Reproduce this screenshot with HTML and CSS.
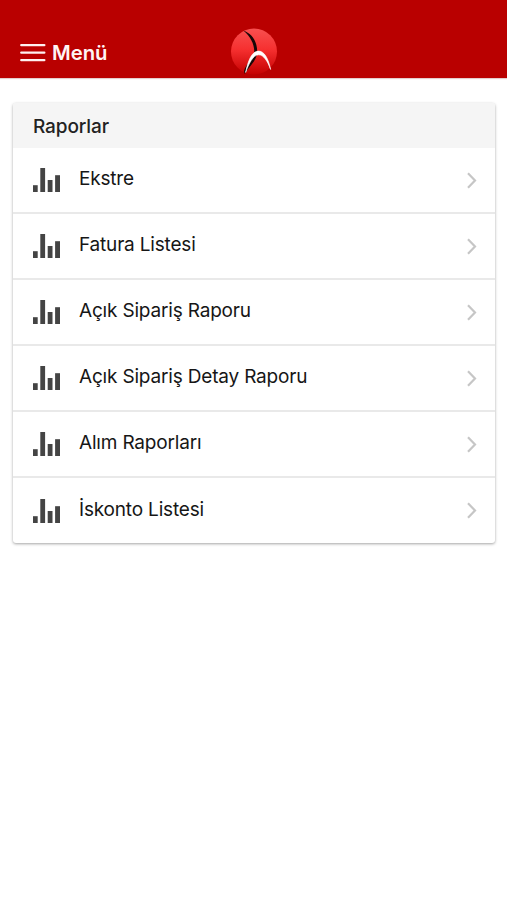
FILE: index.html
```html
<!DOCTYPE html>
<html lang="tr">
<head>
<meta charset="utf-8">
<meta name="viewport" content="width=device-width, initial-scale=1">
<title>Raporlar</title>
<link rel="stylesheet" href="styles.css">
</head>
<body>
<svg class="defs" width="0" height="0" aria-hidden="true">
  <symbol id="bars" viewBox="0 0 28 24">
    <rect x="0" y="17.2" width="4.7" height="6.8"/>
    <rect x="7.3" y="0" width="4.8" height="24"/>
    <rect x="14.7" y="12" width="4.8" height="12"/>
    <rect x="22.1" y="7.2" width="4.9" height="16.8"/>
  </symbol>
  <symbol id="chevron" viewBox="0 0 10 17">
    <path d="M1 1.2 8 8.5 1 15.8"/>
  </symbol>
</svg>
<header class="navbar">
  <button class="menu" type="button">
    <svg class="menu-icon" viewBox="0 0 26 20"><path d="M1.3 2.1H24.3M1.3 9.6H24.3M1.3 17.1H24.3"/></svg>
    <span>Menü</span>
  </button>
  <svg class="logo" viewBox="0 0 48 48">
    <defs>
      <linearGradient id="ball" x1="0" y1="0" x2="0" y2="1">
        <stop offset="0" stop-color="#f85050"/>
        <stop offset=".45" stop-color="#f63030"/>
        <stop offset="1" stop-color="#c40000"/>
      </linearGradient>
    </defs>
    <circle cx="24" cy="23.6" r="23" fill="url(#ball)"/>
    <path d="M13.5 2.8C22 5.5 27.3 13.5 27.2 24C26.5 33 20 37.5 14.8 46L14 43C16 36 23 31 24.2 25.5C25 17 20.5 8.5 13.5 2.8Z" fill="#160707"/>
    <path d="M15.6 44.5C18 32.5 22 23.1 28.5 23.1C34.5 23.1 38.5 31 40.6 41.5C37.5 33 33.5 26.8 28.7 26.8C23 26.8 18.8 36 15.6 44.5Z" fill="#fff" stroke="#fff" stroke-width=".6"/>
  </svg>
</header>
<main class="card">
  <h1 class="card-title">Raporlar</h1>
  <ul class="list">
    <li class="row"><svg class="bars"><use href="#bars"/></svg><span class="label">Ekstre</span><svg class="chevron"><use href="#chevron"/></svg></li>
    <li class="row"><svg class="bars"><use href="#bars"/></svg><span class="label">Fatura Listesi</span><svg class="chevron"><use href="#chevron"/></svg></li>
    <li class="row"><svg class="bars"><use href="#bars"/></svg><span class="label">Açık Sipariş Raporu</span><svg class="chevron"><use href="#chevron"/></svg></li>
    <li class="row"><svg class="bars"><use href="#bars"/></svg><span class="label">Açık Sipariş Detay Raporu</span><svg class="chevron"><use href="#chevron"/></svg></li>
    <li class="row"><svg class="bars"><use href="#bars"/></svg><span class="label">Alım Raporları</span><svg class="chevron"><use href="#chevron"/></svg></li>
    <li class="row"><svg class="bars"><use href="#bars"/></svg><span class="label">İskonto Listesi</span><svg class="chevron"><use href="#chevron"/></svg></li>
  </ul>
</main>
</body>
</html>
```
FILE: styles.css
```css
* { box-sizing: border-box; }

body {
  margin: 0;
  min-height: 900px;
  background: #fff;
  color: #161616;
  font-family: Inter, "Liberation Sans", sans-serif;
}

.defs { display: none; }

.navbar {
  display: grid;
  grid-template-columns: 1fr 48px 1fr;
  align-items: start;
  height: 78px;
  padding: 28px 0 0;
  background: #b90000;
  box-shadow: 0 1px 1px rgba(120, 0, 0, .2);
}

.menu {
  display: flex;
  align-items: center;
  gap: 6px;
  height: 49px;
  padding: 0 0 0 20px;
  border: 0;
  background: none;
  color: #fff4f4;
  font: 600 20.3px/24px Inter, "Liberation Sans", sans-serif;
}

.menu-icon {
  width: 26px;
  height: 20px;
  fill: none;
  stroke: #fff0f0;
  stroke-width: 2.4;
  stroke-linecap: round;
}

.logo { width: 48px; height: 48px; }

.card {
  margin: 25px 12px 0 13px;
  border-radius: 3px;
  background: #fff;
  box-shadow: 0 1px 3px rgba(0, 0, 0, .36);
  overflow: hidden;
}

.card-title {
  height: 45px;
  margin: 0;
  padding: 0 20px;
  background: #f5f5f5;
  color: #222;
  font-size: 19px;
  font-weight: 500;
  letter-spacing: -.1px;
  line-height: 48px;
}

.list { margin: 0; padding: 0; list-style: none; }

.row {
  display: flex;
  align-items: center;
  height: 66px;
  padding: 0 18px 0 20px;
  border-bottom: 2px solid #e9e9e9;
}

.row:last-child {
  height: 65px;
  border-bottom: 0;
}

.bars { width: 28px; height: 24px; fill: #444; }

.label {
  flex: 1;
  margin-left: 18px;
  padding-bottom: 2px;
  font-size: 19px;
  letter-spacing: -.18px;
  line-height: 26px;
}

.chevron {
  width: 10px;
  height: 17px;
  fill: none;
  stroke: #c6c6c6;
  stroke-width: 2.2;
}
```
